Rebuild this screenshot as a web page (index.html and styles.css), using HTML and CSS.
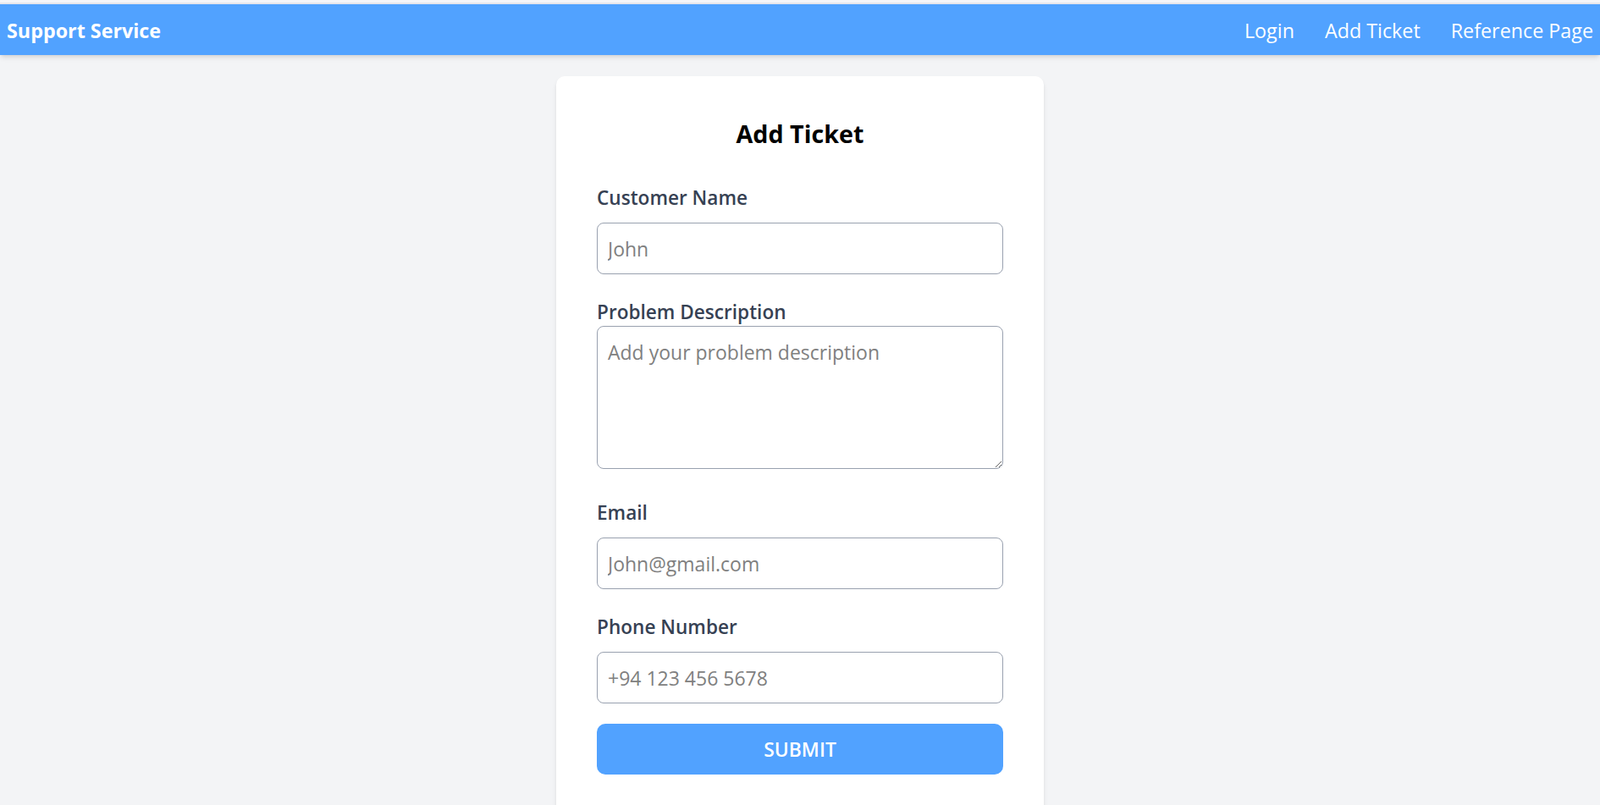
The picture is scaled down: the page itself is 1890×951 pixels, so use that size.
FILE: index.html
```html
<!DOCTYPE html>
<html lang="en">
<head>
<meta charset="utf-8">
<title>Add Ticket</title>
<link rel="stylesheet" href="styles.css">
</head>
<body>
<div class="topstrip"></div>
<nav class="navbar">
  <a class="brand" href="#">Support Service</a>
  <div class="nav-links">
    <a class="nav-link" href="#">Login</a>
    <a class="nav-link" href="#">Add Ticket</a>
    <a class="nav-link" href="#">Reference Page</a>
  </div>
</nav>
<main class="page">
  <form class="card">
    <h1 class="title">Add Ticket</h1>
    <div class="field">
      <label class="label" for="name">Customer Name</label>
      <input class="input" id="name" type="text" placeholder="John">
    </div>
    <div class="field field-area">
      <label class="label label-tight" for="desc">Problem Description</label>
      <textarea class="textarea" id="desc" placeholder="Add your problem description"></textarea>
    </div>
    <div class="field">
      <label class="label" for="email">Email</label>
      <input class="input" id="email" type="email" placeholder="John@gmail.com">
    </div>
    <div class="field field-last">
      <label class="label" for="phone">Phone Number</label>
      <input class="input" id="phone" type="tel" placeholder="+94 123 456 5678">
    </div>
    <button class="submit" type="button">SUBMIT</button>
  </form>
</main>
</body>
</html>
```

FILE: styles.css
```css
* { box-sizing: border-box; }

html, body {
  margin: 0;
  padding: 0;
}

body {
  background: #f3f4f6;
  font-family: "Open Sans", "Noto Sans", sans-serif;
  color: #000;
}

.topstrip {
  height: 5px;
  background: #f5f5f8;
  border-bottom: 2px solid #e6e6ec;
}

.navbar {
  position: relative;
  z-index: 1;
  height: 60px;
  background: #51a2ff;
  display: flex;
  align-items: center;
  justify-content: space-between;
  padding: 2px 8px 0 8px;
  box-shadow: 0 4px 6px -1px rgba(0,0,0,0.1), 0 2px 4px -2px rgba(0,0,0,0.1);
}

.brand {
  color: #fff;
  text-decoration: none;
  font-weight: 700;
  font-size: 23.3px;
}

.nav-links {
  display: flex;
  gap: 36px;
}

.nav-link {
  color: #fff;
  text-decoration: none;
  font-size: 23.3px;
}

.page {
  display: flex;
  justify-content: center;
  padding-top: 25px;
}

.card {
  width: 576px;
  background: #fff;
  border-radius: 10px;
  padding: 48px;
  box-shadow: 0 4px 6px -1px rgba(0,0,0,0.1), 0 2px 4px -2px rgba(0,0,0,0.1);
}

.title {
  margin: 0 0 41px;
  text-align: center;
  font-size: 28.7px;
  line-height: 40px;
  font-weight: 700;
}

.field {
  margin-bottom: 30px;
}

.field-area {
  margin-bottom: 37px;
}

.field-last {
  margin-bottom: 24px;
}

.label {
  display: block;
  font-size: 22.6px;
  line-height: 30px;
  font-weight: 600;
  color: #364153;
  margin-bottom: 14px;
}

.label-tight {
  margin-bottom: 1px;
}

.input,
.textarea {
  display: block;
  width: 100%;
  border: 1px solid #99a1af;
  border-radius: 8px;
  font-family: inherit;
  font-size: 23px;
  color: #000;
  background: #fff;
  outline: none;
}

.input {
  height: 61px;
  padding: 0 12px;
}

.textarea {
  height: 169px;
  padding: 13px 12px;
  line-height: 34.5px;
}

.input::placeholder,
.textarea::placeholder {
  color: #808080;
}

.submit {
  display: block;
  width: 100%;
  height: 60px;
  border: none;
  border-radius: 10px;
  background: #51a2ff;
  color: #fff;
  font-family: inherit;
  font-size: 22.9px;
  font-weight: 600;
}
```
